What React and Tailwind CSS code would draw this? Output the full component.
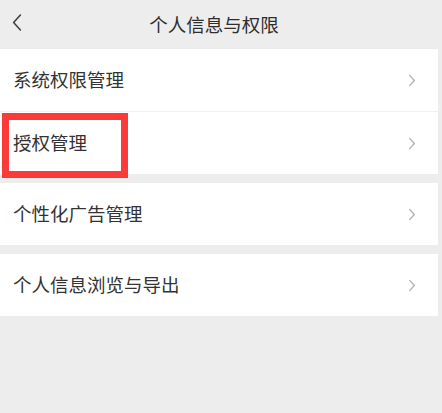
const groups = [
  ['系统权限管理', '授权管理'],
  ['个性化广告管理'],
  ['个人信息浏览与导出']
]

function Chevron({ className, width = 1.4 }) {
  return (
    <svg viewBox="0 0 8 14" className={className} fill="none" stroke="currentColor" strokeWidth={width} strokeLinecap="round" strokeLinejoin="round">
      <path d="M1.5 1.5 L6.5 7 L1.5 12.5" />
    </svg>
  )
}

function Row({ label, highlight }) {
  return (
    <div className="relative flex h-[62px] items-center justify-between bg-white pl-[13px] pr-[22px]">
      <span className="text-[18.5px] text-[#333]">{label}</span>
      <Chevron className="h-[13px] w-[8px] text-[#b0b0b0]" />
      {highlight && (
        <div className="absolute left-[2px] top-[1px] h-[65px] w-[126px] border-[7px] border-[#fb3a3a]" />
      )}
    </div>
  )
}

export default function App() {
  return (
    <div
      className="h-[413px] w-[442px] overflow-hidden bg-[#ededed] pr-[4px]"
      style={{ fontFamily: '"Noto Sans CJK SC", "Noto Sans", sans-serif' }}
    >
      <header className="relative flex h-[49px] items-center justify-center">
        <Chevron className="absolute left-[11px] top-[13px] h-[19px] w-[12px] rotate-180 text-[#444]" width={1.2} />
        <h1 className="-ml-[10px] text-[18.5px] text-[#2e2e2e]">个人信息与权限</h1>
      </header>
      <div className="flex flex-col gap-[9px]">
        {groups.map((group, gi) => (
          <div key={gi} className="flex flex-col gap-px bg-[#f0f0f0]">
            {group.map((label) => (
              <Row key={label} label={label} highlight={label === '授权管理'} />
            ))}
          </div>
        ))}
      </div>
    </div>
  )
}
